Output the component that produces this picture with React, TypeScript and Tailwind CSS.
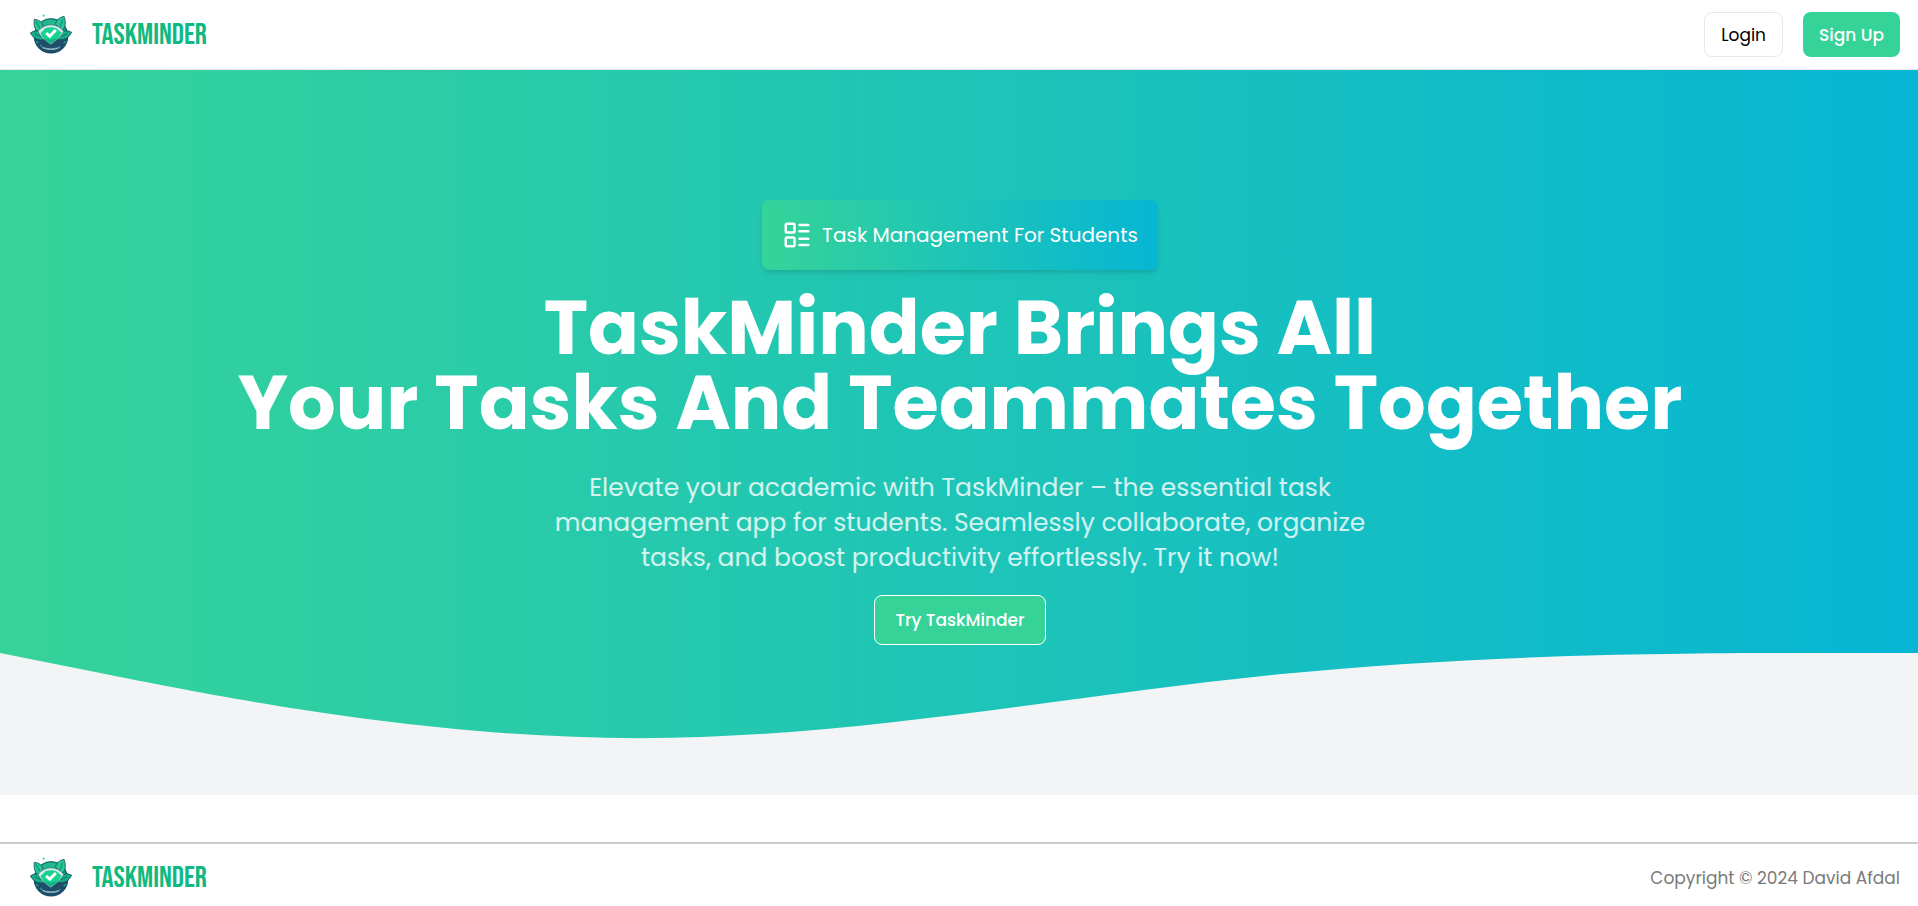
import { LayoutList } from "lucide-react";

function LogoMark() {
  return (
    <svg viewBox="0 0 50 50" className="size-[50px] shrink-0" aria-hidden="true">
      <circle cx="26" cy="26.3" r="17.3" fill="#1d4f6b" />
      <path d="M10 21a16.500 16.500 0 0 1 32 0l-6 4H16z" fill="#15957a" stroke="#1a5f68" strokeWidth=".8" />
      <path d="M16 13q10-6.500 20 0l-2 3q-8-3.500-16 0z" fill="#22b890" />
      <path d="M9.300 9.300q7 .7 9 6.700l-5.300 6q-5-4-3.700-12.700z" fill="#22c795" stroke="#17525c" strokeWidth=".8" />
      <path d="M39 6.200q-7.500 2-8.500 8l6.800 6.300q5.200-5 1.700-14.300z" fill="#22c795" stroke="#17525c" strokeWidth=".8" />
      <path d="M11 11.500l4 7M37.500 9.500l-2.500 8" stroke="#0f7a68" strokeWidth=".9" />
      <path d="M5.300 23q6-4.500 11 .5l3 6q-9 2.500-14-6.500z" fill="#17ad87" stroke="#164a5c" strokeWidth=".8" />
      <path d="M46.700 22.300q-7-3.500-11 1.200l-3 6q10 1.500 14-7.200z" fill="#17ad87" stroke="#164a5c" strokeWidth=".8" />
      <path d="M10 24l7 3M42.500 23.500l-7 3.500" stroke="#0d6c66" strokeWidth=".9" />
      <path d="M12 30.500q5 8.500 14 8.500t14-8.500q-1.500 12-14 12.500-12.500-.5-14-12.500z" fill="#1b4d6b" />
      <path d="M16 36q10 4.600 20 0l-2 2.600q-8 3-16 0z" fill="#6f9aa8" />
      <path d="M18.500 38q7.500 2.600 15 0" fill="none" stroke="#b9d2d6" strokeWidth="1" strokeDasharray="1.500 1" />
      <path d="M11 31.500l2.500 1.500M41 31.500l-2.500 1.500M15 35l1.500 1" stroke="#25b38f" strokeWidth="1.300" />
      <path d="M13 21.500q5-6.500 12.700-6.700 8 .2 13 6.700l-4.500 6.500-8.500 6.500-8.500-6.500z" fill="#d5ebe8" stroke="#3d7482" strokeWidth=".6" />
      <path d="M15.500 23q3-2.500 5-5 5.500-1.500 10.500 0l5.500 4.500-2.500 5-8.300 6.200-7.700-5.700z" fill="#16d391" />
      <path d="M18.500 28.500l7.200 5.200 7.800-5.700-7.500 1.500z" fill="#0fb384" />
      <path d="M21.200 23l3.600 3.200 6-6.200" fill="none" stroke="#fff" strokeWidth="3" />
      <circle cx="18.700" cy="5.700" r="1.100" fill="#4cd3a8" />
      <circle cx="13.300" cy="6.700" r=".6" fill="#a9e5d3" />
      <circle cx="21.500" cy="8" r=".5" fill="#a9e5d3" />
    </svg>
  );
}

function Brand() {
  return (
    <a href="#" className="flex items-center gap-[17px]">
      <LogoMark />
      <span className="font-['Bebas_Neue','Roboto_Condensed',sans-serif] text-[30px] leading-9 text-[#10b981]">
        TASKMINDER
      </span>
    </a>
  );
}

export default function App() {
  return (
    <div className="bg-white font-['Poppins','Inter',sans-serif] text-[17px] leading-6">
      <header className="flex items-start justify-between border-b border-gray-200 pt-2.5 pr-[18px] pb-[9px] pl-[25px]">
        <Brand />
        <nav className="flex items-center gap-5 pt-0.5">
          <button type="button" className="h-[45px] rounded-lg border border-gray-200 px-4 text-black">
            Login
          </button>
          <button type="button" className="h-[45px] rounded-lg bg-[#36d399] px-4 font-medium text-white">
            Sign Up
          </button>
        </nav>
      </header>

      <main className="bg-linear-to-r/srgb from-[#36d399] to-[#06b6d4]">
        <section className="flex flex-col items-center pt-[130px] pr-6 pb-2 pl-[26px] text-center">
          <div className="flex items-center gap-2.5 rounded-lg bg-linear-to-r/srgb from-[#36d399] to-[#06b6d4] p-5 text-xl leading-[30px] text-white shadow-md">
            <LayoutList size={30} aria-hidden="true" />
            Task Management For Students
          </div>
          <h1 className="mt-5 text-[75px] leading-[75px] font-bold text-white">
            TaskMinder Brings All
            <br />
            Your Tasks And Teammates Together
          </h1>
          <p className="mt-[30px] max-w-[840px] text-[25px] leading-[35px] text-white/80">
            Elevate your academic with TaskMinder – the essential task management app for students. Seamlessly
            collaborate, organize tasks, and boost productivity effortlessly. Try it now!
          </p>
          <button
            type="button"
            className="mt-5 h-[50px] rounded-lg border border-white bg-[#36d399] px-5 font-medium text-white"
          >
            Try TaskMinder
          </button>
        </section>
        <svg viewBox="0 96 1440 106.600" preserveAspectRatio="none" className="block w-full" aria-hidden="true">
          <path
            fill="#f3f4f6"
            d="M-10,94L0,96L80,112C160,128,320,160,480,160C640,160,800,128,960,112C1120,96,1280,96,1360,96L1450,96L1450,220L-10,220Z"
          />
        </svg>
      </main>

      <footer className="mt-[47px] flex items-center justify-between border-t-2 border-[#cccccc] pt-[9px] pr-[18px] pb-[3px] pl-[25px]">
        <Brand />
        <p className="text-[#7a7a7a]">Copyright © 2024 David Afdal</p>
      </footer>
    </div>
  );
}
